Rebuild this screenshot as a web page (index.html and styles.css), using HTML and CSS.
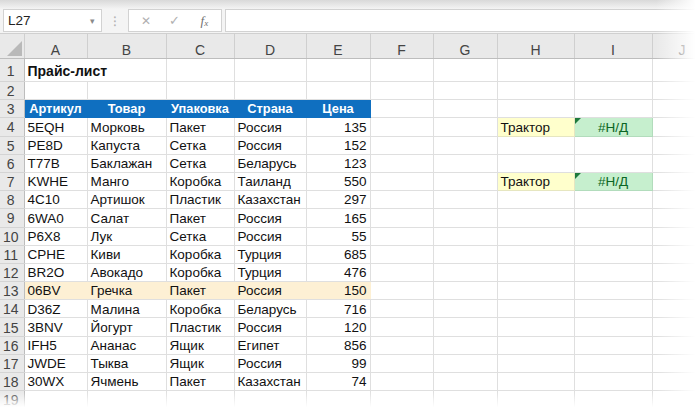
FILE: index.html
```html
<!DOCTYPE html>
<html lang="ru">
<head>
<meta charset="utf-8">
<title>Прайс-лист</title>
<link rel="stylesheet" href="styles.css">
</head>
<body>
<div class="app">
  <div class="toolbar">
    <div class="namebox"><span class="nb-text">L27</span><span class="nb-arrow">▾</span></div>
    <div class="grip">⁝</div>
    <div class="fbtns">
      <span class="fbtn x">✕</span>
      <span class="fbtn ok">✓</span>
      <span class="fbtn fx"><i>f</i><sub>x</sub></span>
    </div>
    <div class="finput"></div>
  </div>
  <div class="sheet">
    <table class="grid">
      <colgroup>
        <col class="c-rh"><col class="c-a"><col class="c-b"><col class="c-c"><col class="c-d"><col class="c-e"><col class="c-f"><col class="c-g"><col class="c-h"><col class="c-i"><col class="c-j">
      </colgroup>
      <tr class="hdr">
        <th class="corner"><span class="tri"></span></th>
        <th>A</th><th>B</th><th>C</th><th>D</th><th>E</th><th>F</th><th>G</th><th>H</th><th>I</th><th>J</th>
      </tr>
      <tr class="r1">
        <th class="rn">1</th>
        <td colspan="2" class="title">Прайс-лист</td><td></td><td></td><td></td><td></td><td></td><td></td><td></td><td></td>
      </tr>
      <tr class="r">
        <th class="rn">2</th>
        <td></td><td></td><td></td><td></td><td></td><td></td><td></td><td></td><td></td><td></td>
      </tr>
      <tr class="r">
        <th class="rn">3</th>
        <td class="th">Артикул</td><td class="th">Товар</td><td class="th">Упаковка</td><td class="th">Страна</td><td class="th th-last">Цена</td><td></td><td></td><td></td><td></td><td></td>
      </tr>
      <tr class="r">
        <th class="rn">4</th>
        <td>5EQH</td><td>Морковь</td><td>Пакет</td><td>Россия</td><td class="num">135</td><td></td><td></td><td class="yellow">Трактор</td><td class="green"><span class="err"></span>#Н/Д</td><td></td>
      </tr>
      <tr class="r">
        <th class="rn">5</th>
        <td>PE8D</td><td>Капуста</td><td>Сетка</td><td>Россия</td><td class="num">152</td><td></td><td></td><td></td><td></td><td></td>
      </tr>
      <tr class="r">
        <th class="rn">6</th>
        <td>T77B</td><td>Баклажан</td><td>Сетка</td><td>Беларусь</td><td class="num">123</td><td></td><td></td><td></td><td></td><td></td>
      </tr>
      <tr class="r">
        <th class="rn">7</th>
        <td>KWHE</td><td>Манго</td><td>Коробка</td><td>Таиланд</td><td class="num">550</td><td></td><td></td><td class="yellow">Трактор</td><td class="green"><span class="err"></span>#Н/Д</td><td></td>
      </tr>
      <tr class="r">
        <th class="rn">8</th>
        <td>4C10</td><td>Артишок</td><td>Пластик</td><td>Казахстан</td><td class="num">297</td><td></td><td></td><td></td><td></td><td></td>
      </tr>
      <tr class="r">
        <th class="rn">9</th>
        <td>6WA0</td><td>Салат</td><td>Пакет</td><td>Россия</td><td class="num">165</td><td></td><td></td><td></td><td></td><td></td>
      </tr>
      <tr class="r">
        <th class="rn">10</th>
        <td>P6X8</td><td>Лук</td><td>Сетка</td><td>Россия</td><td class="num">55</td><td></td><td></td><td></td><td></td><td></td>
      </tr>
      <tr class="r">
        <th class="rn">11</th>
        <td>CPHE</td><td>Киви</td><td>Коробка</td><td>Турция</td><td class="num">685</td><td></td><td></td><td></td><td></td><td></td>
      </tr>
      <tr class="r">
        <th class="rn">12</th>
        <td>BR2O</td><td>Авокадо</td><td>Коробка</td><td>Турция</td><td class="num">476</td><td></td><td></td><td></td><td></td><td></td>
      </tr>
      <tr class="r hl">
        <th class="rn">13</th>
        <td class="hc">06BV</td><td class="hc">Гречка</td><td class="hc">Пакет</td><td class="hc">Россия</td><td class="hc num">150</td><td></td><td></td><td></td><td></td><td></td>
      </tr>
      <tr class="r">
        <th class="rn">14</th>
        <td>D36Z</td><td>Малина</td><td>Коробка</td><td>Беларусь</td><td class="num">716</td><td></td><td></td><td></td><td></td><td></td>
      </tr>
      <tr class="r">
        <th class="rn">15</th>
        <td>3BNV</td><td>Йогурт</td><td>Пластик</td><td>Россия</td><td class="num">120</td><td></td><td></td><td></td><td></td><td></td>
      </tr>
      <tr class="r">
        <th class="rn">16</th>
        <td>IFH5</td><td>Ананас</td><td>Ящик</td><td>Египет</td><td class="num">856</td><td></td><td></td><td></td><td></td><td></td>
      </tr>
      <tr class="r">
        <th class="rn">17</th>
        <td>JWDE</td><td>Тыква</td><td>Ящик</td><td>Россия</td><td class="num">99</td><td></td><td></td><td></td><td></td><td></td>
      </tr>
      <tr class="r">
        <th class="rn">18</th>
        <td>30WX</td><td>Ячмень</td><td>Пакет</td><td>Казахстан</td><td class="num">74</td><td></td><td></td><td></td><td></td><td></td>
      </tr>
      <tr class="r">
        <th class="rn">19</th>
        <td></td><td></td><td></td><td></td><td></td><td></td><td></td><td></td><td></td><td></td>
      </tr>
    </table>
  </div>
  <div class="fade-top"></div>
  <div class="fade-right"></div>
  <div class="fade-bottom"></div>
</div>
</body>
</html>
```

FILE: styles.css
```css
* { box-sizing: border-box; }
html, body { margin: 0; padding: 0; background: #ffffff; }
body {
  font-family: "Liberation Sans", Arial, sans-serif;
  font-size: 13.5px;
  color: #1a1a1a;
}
.app {
  position: relative;
  width: 700px;
  height: 410px;
  overflow: hidden;
  background: #ffffff;
}

/* formula bar */
.toolbar {
  height: 33px;
  background: #f4f4f4;
  display: flex;
  align-items: flex-end;
  padding: 0 0 1px 3px;
}
.namebox {
  width: 99px;
  height: 23px;
  background: #ffffff;
  border: 1px solid #d2d2d2;
  display: flex;
  align-items: center;
  justify-content: space-between;
  padding: 0 6px 0 4px;
}
.nb-text { font-size: 13.5px; color: #222; }
.nb-arrow { font-size: 9px; color: #8a8a8a; }
.grip {
  width: 26px;
  height: 23px;
  display: flex;
  align-items: center;
  justify-content: center;
  color: #b4b4b4;
  font-size: 14px;
}
.fbtns {
  width: 94px;
  height: 23px;
  background: #ffffff;
  border: 1px solid #d2d2d2;
  display: flex;
  align-items: center;
  justify-content: space-around;
  padding: 0 2px;
}
.fbtn { color: #b0b0b0; font-size: 13px; width: 28px; text-align: center; }
.fbtn.x { font-size: 12px; }
.fbtn.fx {
  color: #6f6f6f;
  font-family: "Liberation Serif", "Times New Roman", serif;
  font-size: 13px;
}
.fbtn.fx sub { font-size: 9px; font-style: italic; vertical-align: -1px; }
.finput {
  flex: 1;
  height: 23px;
  margin-left: 3px;
  background: #ffffff;
  border: 1px solid #d2d2d2;
  border-right: none;
}

/* sheet */
.sheet { overflow: hidden; width: 700px; }
.grid {
  border-collapse: collapse;
  table-layout: fixed;
  width: 712px;
}
.c-rh { width: 24px; }
.c-a { width: 63px; }
.c-b { width: 79px; }
.c-c { width: 68px; }
.c-d { width: 72px; }
.c-e { width: 64px; }
.c-f { width: 63px; }
.c-g { width: 64px; }
.c-h { width: 77px; }
.c-i { width: 78px; }
.c-j { width: 60px; }

.grid td {
  border: 1px solid #dfdfdf;
  padding: 1px 3px 0 3px;
  white-space: nowrap;
  overflow: hidden;
  line-height: 1;
  color: #111;
}
.grid th {
  font-weight: normal;
  background: #e9e9e9;
  color: #444;
  padding: 0;
  line-height: 1;
}
.hdr { height: 25px; }
.hdr th {
  border-top: 1px solid #d0d0d0;
  border-bottom: 1px solid #bdbdbd;
  border-left: 1px solid #cfcfcf;
  border-right: 1px solid #cfcfcf;
  padding-top: 8px;
  font-size: 14px;
}
.hdr th.corner { position: relative; border-left: none; }
.tri {
  position: absolute;
  right: 2px;
  bottom: 2px;
  width: 0;
  height: 0;
  border-left: 15px solid transparent;
  border-bottom: 15px solid #b9b9b9;
}
.r1 { height: 23px; }
.r { height: 18.2px; }
th.rn {
  border-right: 1px solid #bdbdbd;
  border-bottom: 1px solid #d4d4d4;
  text-align: center;
  padding: 1px 2px 0 0;
  font-size: 14px;
  color: #444;
}
.title {
  font-weight: bold;
  font-size: 14px;
  color: #111;
}
.grid td.th {
  background: #0f6fc0;
  border-color: #0f6fc0;
  color: #ffffff;
  font-weight: bold;
  font-size: 12.8px;
  text-align: center;
}
.grid td.th-last { border-right-color: #0f6fc0; }
.grid td.num { text-align: right; padding-right: 3px; }
.grid td.hc {
  background: #fdf0d4;
  border-left-color: #fdf0d4;
  border-right-color: #fdf0d4;
}
.grid td.yellow {
  background: #ffffcc;
  border-color: #e6e6c0;
}
.grid td.green {
  position: relative;
  background: #c6efce;
  border-color: #b2dcbc;
  color: #0b6623;
  text-align: center;
}
.err {
  position: absolute;
  left: 0;
  top: 0;
  width: 0;
  height: 0;
  border-top: 6px solid #1e7a3c;
  border-right: 6px solid transparent;
}

/* paper edge effects */
.fade-top {
  position: absolute;
  left: 0; top: 0;
  width: 700px; height: 9px;
  background: linear-gradient(to bottom, #d9d9d9, rgba(244,244,244,0));
  pointer-events: none;
}
.fade-right {
  position: absolute;
  top: 0; right: 0;
  width: 44px; height: 410px;
  background: linear-gradient(to right, rgba(255,255,255,0), #ffffff 90%);
  pointer-events: none;
}
.fade-bottom {
  position: absolute;
  left: 0; bottom: 0;
  width: 700px; height: 18px;
  background: linear-gradient(to bottom, rgba(255,255,255,0), #ffffff 85%);
  pointer-events: none;
}
```
